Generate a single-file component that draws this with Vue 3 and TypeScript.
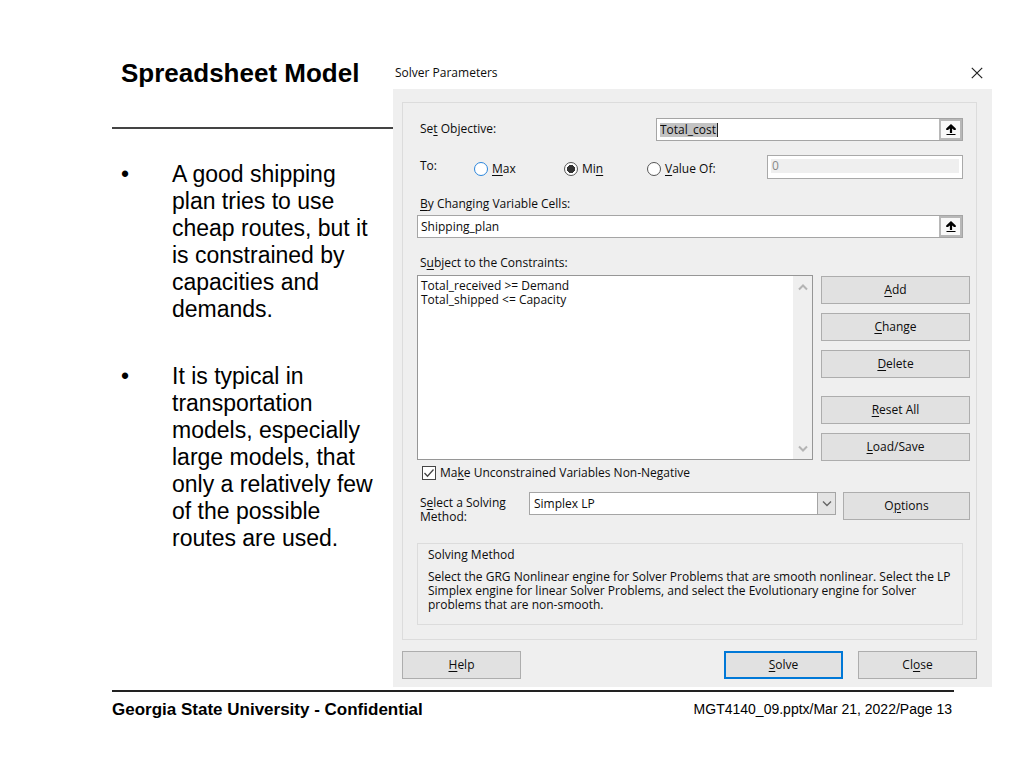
<script setup lang="ts">
import { ref } from 'vue'

interface Caption {
  before: string
  key: string
  after: string
}

const points: string[] = [
  'A good shipping plan tries to use cheap routes, but it is constrained by capacities and demands.',
  'It is typical in transportation models, especially large models, that only a relatively few of the possible routes are used.',
]

const goals: (Caption & { id: string })[] = [
  { id: 'max', before: '', key: 'M', after: 'ax' },
  { id: 'min', before: 'Mi', key: 'n', after: '' },
  { id: 'value', before: '', key: 'V', after: 'alue Of:' },
]

const editActions: Caption[] = [
  { before: '', key: 'A', after: 'dd' },
  { before: '', key: 'C', after: 'hange' },
  { before: '', key: 'D', after: 'elete' },
]

const setActions: Caption[] = [
  { before: '', key: 'R', after: 'eset All' },
  { before: '', key: 'L', after: 'oad/Save' },
]

const constraints: string[] = ['Total_received >= Demand', 'Total_shipped <= Capacity']

const objective = ref('Total_cost')
const goal = ref('min')
const targetValue = ref('0')
const cells = ref('Shipping_plan')
const nonNegative = ref(true)
const method = ref('Simplex LP')
</script>

<template>
  <div class="slide">
    <main class="content">
      <section class="notes">
        <h1>Spreadsheet Model</h1>
        <ul>
          <li v-for="point in points" :key="point"><span class="dot">•</span><span>{{ point }}</span></li>
        </ul>
      </section>

      <section class="dialog" role="dialog" aria-labelledby="dialog-title">
        <header class="titlebar">
          <h2 id="dialog-title">Solver Parameters</h2>
          <button class="dismiss" type="button" aria-label="Close window">
            <svg width="12" height="12" viewBox="0 0 12 12"><path d="M.8.8l10.4 10.4M11.2.8L.8 11.2" fill="none" stroke="#222" stroke-width="1.2" /></svg>
          </button>
        </header>

        <form class="surface" @submit.prevent>
          <div class="panel">
            <div class="row objective">
              <label for="objective">Se<u>t</u> Objective:</label>
              <div class="reference">
                <input id="objective" v-model="objective" class="highlighted" type="text" />
                <button type="button" aria-label="Pick objective cell">
                  <svg width="12" height="12" viewBox="0 0 12 12"><path d="M6 0L10.8 4.4V6H9L7.1 4.6V9H4.9V4.6L3 6H1.2V4.4Z" fill="#000" /><path d="M1.5 10.5h9" stroke="#000" /></svg>
                </button>
              </div>
            </div>

            <div class="row goal">
              <span class="to">To:</span>
              <div class="radios">
                <label v-for="g in goals" :key="g.id" :class="g.id">
                  <input v-model="goal" type="radio" name="goal" :value="g.id" />
                  <span>{{ g.before }}<u>{{ g.key }}</u>{{ g.after }}</span>
                </label>
              </div>
              <div class="target"><input v-model="targetValue" type="text" aria-label="Target value" disabled /></div>
            </div>

            <label class="caption" for="cells"><u>B</u>y Changing Variable Cells:</label>
            <div class="reference inset">
              <input id="cells" v-model="cells" type="text" />
              <button type="button" aria-label="Pick variable cells">
                <svg width="12" height="12" viewBox="0 0 12 12"><path d="M6 0L10.8 4.4V6H9L7.1 4.6V9H4.9V4.6L3 6H1.2V4.4Z" fill="#000" /><path d="M1.5 10.5h9" stroke="#000" /></svg>
              </button>
            </div>

            <label class="caption" for="constraints">S<u>u</u>bject to the Constraints:</label>
            <div class="constraints">
              <div class="listbox">
                <select id="constraints" multiple>
                  <option v-for="c in constraints" :key="c">{{ c }}</option>
                </select>
                <div class="scroll" aria-hidden="true">
                  <svg width="10" height="8" viewBox="0 0 10 8"><path d="M1 6.5l4-4 4 4" fill="none" stroke="#b4b4b4" stroke-width="2" /></svg>
                  <svg width="10" height="8" viewBox="0 0 10 8"><path d="M1 1.5l4 4 4-4" fill="none" stroke="#b4b4b4" stroke-width="2" /></svg>
                </div>
              </div>
              <div class="actions">
                <div class="group">
                  <button v-for="a in editActions" :key="a.key" class="push" type="button"><u>{{ a.key }}</u>{{ a.after }}</button>
                </div>
                <div class="group">
                  <button v-for="a in setActions" :key="a.key" class="push" type="button"><u>{{ a.key }}</u>{{ a.after }}</button>
                </div>
              </div>
            </div>

            <label class="check">
              <input v-model="nonNegative" type="checkbox" />
              <svg width="14" height="14" viewBox="0 0 14 14"><path d="M2.5 7l3 3.2L11.5 3.5" fill="none" stroke="#444" stroke-width="1.3" /></svg>
              <span>Ma<u>k</u>e Unconstrained Variables Non-Negative</span>
            </label>

            <div class="method">
              <label for="method">S<u>e</u>lect a Solving Method:</label>
              <div class="combo">
                <select id="method" v-model="method">
                  <option>Simplex LP</option>
                  <option>GRG Nonlinear</option>
                  <option>Evolutionary</option>
                </select>
                <span class="arrow">
                  <svg width="10" height="8" viewBox="0 0 10 8"><path d="M1 1.5l4 4 4-4" fill="none" stroke="#666" stroke-width="1.4" /></svg>
                </span>
              </div>
              <button class="push options" type="button">O<u>p</u>tions</button>
            </div>

            <div class="about">
              <h3>Solving Method</h3>
              <p>Select the GRG Nonlinear engine for Solver Problems that are smooth nonlinear. Select the LP Simplex engine for linear Solver Problems, and select the Evolutionary engine for Solver problems that are non-smooth.</p>
            </div>
          </div>

          <div class="buttons">
            <button class="push help" type="button"><u>H</u>elp</button>
            <button class="push solve" type="submit"><u>S</u>olve</button>
            <button class="push" type="button">Cl<u>o</u>se</button>
          </div>
        </form>
      </section>
    </main>

    <footer>
      <strong>Georgia State University - Confidential</strong>
      <span>MGT4140_09.pptx/Mar 21, 2022/Page 13</span>
    </footer>
  </div>
</template>

<style>
body {
  margin: 0;
  background: #fff;
}
</style>

<style scoped>
* {
  box-sizing: border-box;
}

.slide {
  padding: 56px 32px 48px 112px;
  color: #000;
  font-family: "Liberation Sans", Arial, sans-serif;
}

.content {
  display: grid;
  grid-template-columns: minmax(0, 281fr) minmax(0, 599fr);
}

h1 {
  margin: 0;
  padding: 2px 0 38px 9px;
  border-bottom: 2px solid #444;
  font-size: 26px;
  line-height: 31px;
  white-space: nowrap;
}

ul {
  display: flex;
  flex-direction: column;
  gap: 40px;
  margin: 0;
  padding: 32px 16px 0 9px;
  list-style: none;
  font-size: 23px;
  line-height: 27px;
}

li {
  display: flex;
}

.dot {
  flex: 0 0 51px;
}

.dialog {
  color: #0c0c0c;
  font-family: "Open Sans", "Noto Sans", sans-serif;
  font-size: 12px;
  line-height: 14px;
}

.dialog input,
.dialog select,
.dialog button {
  margin: 0;
  border-radius: 0;
  color: inherit;
  font: inherit;
}

u {
  text-underline-offset: 2px;
}

.titlebar {
  display: flex;
  align-items: center;
  justify-content: space-between;
  height: 33px;
  padding: 0 9px 0 2px;
}

h2 {
  margin: 0;
  font-size: 12px;
  font-weight: 400;
}

.dialog .dismiss {
  display: flex;
  padding: 0;
  border: 0;
  background: none;
}

.surface {
  padding: 13px 15px 8px 9px;
  background: #efefef;
}

.panel {
  padding: 15px 6px 14px 14px;
  border: 1px solid #dcdcdc;
}

.row {
  display: flex;
  justify-content: space-between;
  margin-right: 7px;
  padding-left: 3px;
}

.objective label {
  padding-top: 4px;
}

.reference {
  display: flex;
  height: 23px;
  border: 1px solid #a5a5a5;
  background: #fff;
}

.objective .reference {
  flex: 0 0 307px;
}

.reference input {
  flex: 1;
  min-width: 0;
  padding: 0 3px;
  border: 0;
  outline: 0;
  background: transparent;
}

.reference .highlighted {
  background:
    linear-gradient(#222, #222) 60px 4px / 1px 14px no-repeat,
    linear-gradient(#c3c3c3, #c3c3c3) 3px 4px / 57px 14px no-repeat;
}

.reference button {
  display: flex;
  flex: 0 0 23px;
  align-items: center;
  justify-content: center;
  padding: 0;
  border: 2px solid #b8b8b8;
  background: #f8f8f8;
}

.goal {
  margin-top: 14px;
}

.to {
  padding-top: 4px;
}

.radios {
  display: grid;
  flex: 1;
  grid-template-columns: 90px 83px 1fr;
  margin-left: 37px;
}

.radios label {
  display: flex;
  align-items: center;
  gap: 4px;
  padding-top: 3px;
}

.radios input {
  width: 14px;
  height: 14px;
  border: 1px solid #555;
  background: #fff;
  appearance: none;
}

.dialog .radios input {
  border-radius: 50%;
}

.radios .max input {
  border-color: #2b86dc;
}

.radios input:checked {
  background: radial-gradient(circle, #333 0 4px, #fff 4px);
}

.target {
  flex: 0 0 196px;
  height: 24px;
  padding: 3px;
  border: 1px solid #a9a9a9;
  background: #fff;
}

.dialog .target input {
  display: block;
  width: 100%;
  height: 14px;
  padding: 0 1px;
  border: 0;
  background: #efefef;
  color: #888;
}

.caption {
  display: block;
  margin: 18px 0 4px 3px;
}

.inset {
  margin-right: 7px;
}

.constraints {
  display: flex;
  align-items: flex-start;
  gap: 8px;
  margin-top: 5px;
}

.listbox {
  display: flex;
  flex: 1;
  height: 185px;
  border: 1px solid #969696;
  background: #fff;
}

.listbox select {
  flex: 1;
  min-width: 0;
  padding: 1px 0 0 3px;
  overflow: hidden;
  border: 0;
  outline: 0;
  background: transparent;
  appearance: none;
}

.listbox option {
  height: 14px;
  min-height: 14px;
  padding: 0;
  line-height: 14px;
}

.scroll {
  display: flex;
  flex: 0 0 19px;
  flex-direction: column;
  align-items: center;
  justify-content: space-between;
  padding: 7px 0 6px;
  background: #efefef;
}

.actions {
  display: flex;
  flex: 0 0 149px;
  flex-direction: column;
  gap: 18px;
  padding-top: 1px;
}

.group {
  display: flex;
  flex-direction: column;
  gap: 9px;
}

.push {
  height: 28px;
  padding: 0;
  border: 1px solid #adadad;
  background: #e1e1e1;
}

.check {
  display: flex;
  align-items: center;
  margin: 5px 0 0 5px;
}

.check input {
  width: 14px;
  height: 14px;
  border: 1px solid #444;
  background: #fff;
  appearance: none;
}

.check svg {
  margin: 0 4px 0 -14px;
  visibility: hidden;
}

.check input:checked + svg {
  visibility: visible;
}

.method {
  display: flex;
  align-items: flex-start;
  margin-top: 12px;
  padding-left: 3px;
}

.method label {
  flex: 0 0 109px;
  padding: 4px 16px 0 0;
}

.combo {
  position: relative;
  flex: 1;
}

.combo select {
  display: block;
  width: 100%;
  height: 23px;
  padding: 0 24px 0 4px;
  border: 1px solid #a5a5a5;
  background: #fff;
  appearance: none;
}

.arrow {
  position: absolute;
  top: 0;
  right: 0;
  bottom: 0;
  display: flex;
  align-items: center;
  justify-content: center;
  width: 19px;
  border: 1px solid #a5a5a5;
  background: #e4e4e4;
  pointer-events: none;
}

.method .options {
  flex: 0 0 127px;
  margin-left: 7px;
}

.about {
  margin: 19px 7px 0 0;
  padding: 4px 8px 12px 10px;
  border: 1px solid #dcdcdc;
}

h3,
.about p {
  margin: 0;
  font-size: inherit;
  font-weight: 400;
}

.about p {
  margin-top: 8px;
}

.buttons {
  display: flex;
  gap: 15px;
  margin-top: 11px;
}

.buttons .push {
  flex: 0 0 119px;
}

.buttons .help {
  margin-right: auto;
}

.buttons .solve {
  border: 2px solid #0078d7;
}

footer {
  display: flex;
  justify-content: space-between;
  margin: 3px 38px 0 0;
  padding: 8px 2px 0 0;
  border-top: 2px solid #222;
  font-size: 14px;
  line-height: 19px;
}

footer strong {
  font-size: 17px;
}
</style>
